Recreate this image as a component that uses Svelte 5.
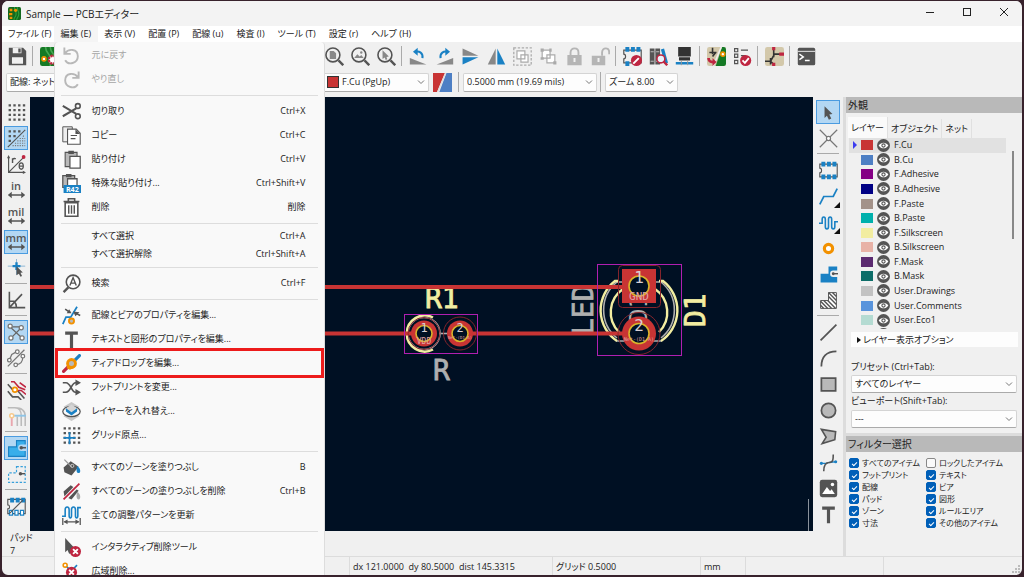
<script lang="ts">
	interface MenuEntry {
		label?: string;
		icon?: string;
		key?: string;
		disabled?: boolean;
		marked?: boolean;
	}

	// Icons share a 24 unit grid
	const icons: Record<string, string> = {
		app: '<rect width="24" height="24" rx="3" fill="#13691d"/><path d="M12 0c0 8 3 7 3 13s-4 5-4 11M17 0c0 8 3 7 3 13s-4 6-4 11" fill="none" stroke="#2fa33c" stroke-width="2"/><path d="M3 3h5v5H3zM2 11h6v4H2zM3 18h5v4H3z" fill="#f29100"/><circle cx="14" cy="6" r="3" fill="#f29100"/>',
		save: '<path d="M1 1h18l4 4v18H1z" fill="#545454"/><path d="M6 1h11v7H6zM5 13h14v8H5z" fill="#f0f0f0"/><path d="M13 2h3v5h-3z" fill="#545454"/>',
		board: '<rect width="24" height="24" rx="3" fill="#157a25"/><path d="M7 0c0 8 6 8 6 14v10M13 0c0 8 6 8 6 14v10" fill="none" stroke="#45a852" stroke-width="2"/><circle cx="5" cy="15" r="2.5" fill="#fff" stroke="#f29100" stroke-width="2"/><circle cx="16" cy="16" r="5" fill="#fff" stroke="#bf2641" stroke-width="3" stroke-dasharray="3 1"/>',
		undo: '<path d="M3 2v8h8M4 9c4-6 16-6 16 4 0 9-12 12-16 5" fill="none" stroke="#b8b8b8" stroke-width="2.4"/>',
		redo: '<path d="M21 2v8h-8M20 9C16 3 4 3 4 13c0 9 12 12 16 5" fill="none" stroke="#b8b8b8" stroke-width="2.4"/>',
		cut: '<path d="M1 5l17 10M1 18L18 8" stroke="#545454" stroke-width="2.600"/><circle cx="20" cy="5" r="3" fill="none" stroke="#545454" stroke-width="2"/><circle cx="20" cy="18" r="3" fill="none" stroke="#545454" stroke-width="2"/>',
		copy: '<path d="M1 1h12v19H1z" fill="#eee" stroke="#545454" stroke-width="1.2"/><path d="M7 4h11l5 5v14H7z" fill="#fff" stroke="#545454" stroke-width="1.4"/><path d="M17 4v6h6z" fill="#545454"/><path d="M11 12h8M11 16h6" stroke="#545454" stroke-width="1.5"/>',
		paste: '<path d="M4 3h15v18H4z" fill="#b9b9b9" stroke="#545454" stroke-width="1.4"/><path d="M8 1h7v4H8z" fill="#545454"/><path d="M10 8h13v15H10z" fill="#fff" stroke="#545454" stroke-width="1.6"/>',
		pasteSpecial: '<path d="M1 2h15v15H1z" fill="#b9b9b9" stroke="#545454" stroke-width="1.6"/><path d="M5 0h7v4H5z" fill="#545454"/><path d="M7 6h12v10H7z" fill="#fff" stroke="#545454" stroke-width="1.6"/><path d="M2 14h22v10H2z" fill="#1a81c4"/><text x="13" y="22.500" font-size="9" font-weight="700" text-anchor="middle" fill="#fff">R42</text>',
		trash: '<path d="M4 6h16v17H4z" fill="#fff" stroke="#545454" stroke-width="2"/><path d="M2 4.500h20M8 4V1h8v3" fill="none" stroke="#545454" stroke-width="2"/><path d="M8.500 9v11M12 9v11M15.500 9v11" stroke="#545454" stroke-width="1.8"/>',
		find: '<circle cx="14" cy="10" r="8.600" fill="#fff" stroke="#545454" stroke-width="2"/><path d="M8 17l-6 6" stroke="#545454" stroke-width="3"/><path d="M10 14.500l4-10 4 10M11.500 11.500h5" fill="none" stroke="#545454" stroke-width="1.8"/>',
		viaEdit: '<path d="M1 23l4-9h6L19 1" fill="none" stroke="#1a81c4" stroke-width="2.2"/><path d="M4 4l6 4M23 12l-6-3" stroke="#545454" stroke-width="2"/><path d="M12 9l-6 0 3-5zM14 7l8 1-5 5z" fill="#545454"/><circle cx="12" cy="19" r="3.200" fill="#b9b9b9" stroke="#f29100" stroke-width="2.4"/>',
		text: '<path d="M4 2h16v4h-6v17h-4V6H4z" fill="#545454"/>',
		teardrop: '<path d="M2 22l6-6" stroke="#bf2641" stroke-width="4" stroke-linecap="round"/><path d="M16 8l6-6" stroke="#1a81c4" stroke-width="4" stroke-linecap="round"/><path d="M6 18l1-9 8-3 3 3-2 8-6 3z" fill="#f29100"/><circle cx="12" cy="12" r="5" fill="#b9b9b9" stroke="#f29100" stroke-width="3.600"/>',
		swap: '<path d="M1 6h4c6 0 7 12 12 12h3M1 18h4c6 0 7-12 12-12h3" fill="none" stroke="#545454" stroke-width="2.2"/><path d="M17 2l7 4-7 4zM17 14l7 4-7 4z" fill="#545454"/>',
		layers: '<path d="M12 0l10 6-10 6L2 6z" fill="#c8c8c8"/><path d="M12 12l10 6-10 6-10-6z" fill="#c8c8c8"/><ellipse cx="12" cy="12" rx="11" ry="6.500" fill="#f9f9f9" stroke="#545454" stroke-width="1.6"/><path d="M12 3l9 6-9 6-9-6z" fill="#d5d5d5"/><path d="M5 8l7 5 7-5v4l-7 5-7-5z" fill="#1a81c4"/>',
		gridOrigin: '<path d="M2 3h21M2 9h21M2 15h21M2 21h21" stroke="#545454" stroke-width="3" stroke-dasharray="3 3"/><path d="M9.500 8v15M2 15h15" stroke="#1a81c4" stroke-width="2.2"/>',
		fill: '<path d="M2 12L11 4l10 7-9 11-9-4z" fill="#545454"/><path d="M3 2l9 9" stroke="#999" stroke-width="1.6"/><circle cx="13" cy="10" r="2" fill="none" stroke="#ddd" stroke-width="1"/><path d="M19 10c5 3 5 9 2 9-3 0-3-4-2-9z" fill="#1a81c4"/>',
		unfill: '<path d="M2 12L11 4l10 7-9 11-9-4z" fill="#545454"/><path d="M19 12c5 3 5 10 2 10-3 0-3-5-2-10z" fill="#aaa"/><path d="M2 23L22 2" stroke="#f9f9f9" stroke-width="5"/><path d="M2 22L22 2" stroke="#bf2641" stroke-width="2.2"/>',
		tune: '<path d="M0 13h4V5c0-5 5-5 5 0v7c0 4 3 4 3 0V5c0-5 5-5 5 0v7c0 4 3 4 3 0V2h4" fill="none" stroke="#1a81c4" stroke-width="2"/><path d="M1 15v9M23 15v9M3 20h18" stroke="#545454" stroke-width="1.6"/><path d="M2 20l5-3v6zM22 20l-5-3v6z" fill="#545454"/>',
		deleteTool: '<path d="M4 0l12 13-5 1 2 5-4 1-2-5-3 3z" fill="#545454"/><circle cx="17" cy="17" r="7" fill="#bf2641"/><path d="M14 14l6 6M20 14l-6 6" stroke="#fff" stroke-width="2.4"/>',
		globalDelete: '<path d="M4 4l16 16M2 20h8M19 4l-8 8" stroke="#1a81c4" stroke-width="2"/><circle cx="4" cy="4" r="2.500" fill="#fff" stroke="#f29100" stroke-width="2"/><circle cx="12" cy="13" r="7" fill="#bf2641"/><path d="M9 10l6 6M15 10l-6 6" stroke="#fff" stroke-width="2.400"/>',
		zoomPage: '<circle cx="10" cy="10" r="8.800" fill="none" stroke="#545454" stroke-width="2"/><path d="M17 17l6 6" stroke="#545454" stroke-width="3"/><path d="M6 5h5l3 3v7H6z" fill="#888"/>',
		zoomObjects: '<circle cx="10" cy="10" r="8.800" fill="none" stroke="#545454" stroke-width="2"/><path d="M17 17l6 6" stroke="#545454" stroke-width="3"/><path d="M4 14l4-5 3 3 2-2 3 4z" fill="#888"/><circle cx="13" cy="7" r="1.500" fill="#888"/>',
		zoomSelection: '<circle cx="10" cy="10" r="8.800" fill="none" stroke="#545454" stroke-width="2"/><path d="M17 17l6 6" stroke="#545454" stroke-width="3"/><path d="M7 4l8 8-3 .5 1 3-2 .8-1.300-3L7 15z" fill="#888"/>',
		rotateLeft: '<path d="M1 14l21 8H1z" fill="#888"/><path d="M17 14c1-7-4-9-9-8" fill="none" stroke="#1a81c4" stroke-width="2.600"/><path d="M11 1v10L5 6z" fill="#1a81c4"/>',
		rotateRight: '<path d="M23 14L2 22h21z" fill="#888"/><path d="M7 14C6 7 11 5 16 6" fill="none" stroke="#1a81c4" stroke-width="2.600"/><path d="M13 1v10l6-5z" fill="#1a81c4"/>',
		mirrorV: '<path d="M2 2l20 9H2z" fill="#888"/><path d="M2 22l20-9H2z" fill="#1a81c4"/>',
		mirrorH: '<path d="M11 2v20H1z" fill="#888"/><path d="M13 2v20h10z" fill="#1a81c4"/>',
		group: '<rect x="1" y="1" width="22" height="22" fill="none" stroke="#aaa" stroke-width="1.600" stroke-dasharray="3 2"/><path d="M5 5h10v10H5zM10 10h9v9h-9z" fill="#fff" stroke="#aaa" stroke-width="1.500"/>',
		ungroup: '<path d="M4 4h10v10H4zM10 10h10v10H10z" fill="#fff" stroke="#aaa" stroke-width="1.500"/><path d="M2 2h4v4H2zM13 2h3v4h-3zM2 13h4v3H2zM18 18h4v4h-4z" fill="#aaa"/>',
		lock: '<path d="M3 10h18v13H3z" fill="#b5b5b5"/><path d="M7 11V7c0-7 10-7 10 0v4" fill="none" stroke="#b5b5b5" stroke-width="2.400"/><path d="M12 14v5" stroke="#f0f0f0" stroke-width="2.500"/>',
		unlock: '<path d="M1 11h17v12H1z" fill="#b5b5b5"/><path d="M14 11V7c0-7 9-7 9 0v2" fill="none" stroke="#b5b5b5" stroke-width="2.400"/><path d="M9.500 14v5" stroke="#f0f0f0" stroke-width="2.500"/>',
		fpEditor: '<path d="M1 4h22v16H1v-5c3 0 3-6 0-6z" fill="none" stroke="#545454" stroke-width="1.500"/><path d="M3 0h5v6H3zM10 0h5v6h-5zM17 0h5v6h-5zM3 18h5v6H3z" fill="#1a81c4"/><circle cx="17" cy="17" r="7" fill="#bf2641"/><path d="M13 21l7-7" stroke="#fff" stroke-width="2.500"/>',
		library: '<path d="M1 2h6v20H1zM8 2h6v20H8z" fill="#545454"/><path d="M2 6h4M9 6h4M2 18h4M9 18h4" stroke="#bbb" stroke-width="1.500"/><path d="M15 3l4-1 5 18-4 1z" fill="#1a81c4"/><circle cx="15" cy="15" r="5" fill="#e8f2fa" stroke="#bf2641" stroke-width="2"/><path d="M18 18l5 5" stroke="#bf2641" stroke-width="3"/>',
		update3d: '<path d="M4 0h16v12H4zM5 13h14v4H5z" fill="#333"/><path d="M1 20.500h22" stroke="#1a81c4" stroke-width="3"/><path d="M8 17v6M16 17v6" stroke="#999" stroke-width="1.200"/>',
		schToPcb: '<rect width="24" height="24" rx="3" fill="#d3c8aa"/><path d="M19 0h2a3 3 0 0 1 3 3v18a3 3 0 0 1-3 3H11z" fill="#157a25"/><path d="M18 0L8 24" stroke="#eee" stroke-width="2"/><path d="M7 1v8M3 7h9M11 7L7 12" stroke="#333" stroke-width="2"/><circle cx="20" cy="9" r="2.500" fill="#fff" stroke="#f29100" stroke-width="2"/><path d="M2 14c0 5 3 5 6 5" fill="none" stroke="#bf2641" stroke-width="3.500"/><path d="M7 14v10l5-5z" fill="#bf2641"/>',
		drc: '<path d="M2 2h4v4H2zM2 9h4v4H2zM2 17h4v4H2z" fill="none" stroke="#545454" stroke-width="1.500"/><path d="M10 4h9M10 11h6" stroke="#545454" stroke-width="1.600"/><circle cx="16" cy="17" r="7" fill="#bf2641"/><path d="M12 17l3 3 5-6" fill="none" stroke="#fff" stroke-width="2.300"/>',
		schematic: '<rect width="24" height="24" rx="3" fill="#d3c8aa"/><path d="M11 0v8M11 9h13M11 6v7M12 9l-5 9M0 18h7M7 14v8M7 18l4 4" fill="none" stroke="#333" stroke-width="2"/><path d="M9 0h4v4H9zM18 7h6v4h-6zM9 20h4v4H9z" fill="#bf2641"/>',
		console: '<rect x="1" y="1" width="22" height="22" rx="2" fill="#545454"/><path d="M1 5.500h22" stroke="#eee" stroke-width="1.200"/><path d="M3 9l5 3.500L3 16M10 17h6" fill="none" stroke="#fff" stroke-width="1.800"/>',
		layerPair: '<path d="M0 0h15L5 24H0z" fill="#c83434"/><path d="M17 0h7v24H8z" fill="#4d7fc4"/><path d="M16 0L6 24" stroke="#ddd" stroke-width="1.500"/>',
		grid: '<path d="M2 3h21M2 9h21M2 15h21M2 21h21" stroke="#545454" stroke-width="3" stroke-dasharray="3 3"/>',
		gridOverride: '<path d="M2 3h15M2 9h9M2 15h3" stroke="#545454" stroke-width="3" stroke-dasharray="3 3"/><path d="M1 23L23 1" stroke="#545454" stroke-width="1.400"/><path d="M20 9h3M16 12h7M13 15h10M10 18h13M7 21h16" stroke="#777" stroke-width="1.500" stroke-dasharray="1.500 1.500"/>',
		polar: '<path d="M2 3v19h20M2 22L21 3" fill="none" stroke="#545454" stroke-width="1.500"/><path d="M0 4l2-4 2 4zM20 20l4 2-4 2z" fill="#545454"/><circle cx="21" cy="2.500" r="2.400" fill="#bf2641"/><path d="M7 10V4m0 2c1-2 3-2 4-1" fill="none" stroke="#545454" stroke-width="1.800"/><ellipse cx="18" cy="14" rx="2.600" ry="4" fill="none" stroke="#545454" stroke-width="1.600"/><path d="M15.500 14h5" stroke="#545454" stroke-width="1.400"/>',
		arrows: '<path d="M4 19h16" stroke="#545454" stroke-width="2"/><path d="M1 19l5-4v8zM23 19l-5-4v8z" fill="#545454"/>',
		cursor: '<path d="M12 0v20M1 9h22" stroke="#8ab4d4" stroke-width="1.200"/><path d="M12 4v10M7 9h10" stroke="#1a81c4" stroke-width="3"/><path d="M12 9l8 8-3 .5 2 4-2 1-2-4-3 2z" fill="#545454"/>',
		angle: '<path d="M3 1v20h20M3 21L19 4M3 13h6c2 2 3 4 3 8" fill="none" stroke="#545454" stroke-width="2"/>',
		ratsnest: '<path d="M5 6l14 13M5 5h15M4 20L18 6" stroke="#666" stroke-width="1.500"/><g fill="#fff" stroke="#777" stroke-width="1.600"><circle cx="4" cy="4" r="2.600"/><circle cx="18" cy="6" r="2.600"/><circle cx="5" cy="19" r="2.600"/><circle cx="19" cy="19" r="2.600"/></g>',
		curved: '<path d="M1 22L22 1M3 14l3-7 7-4M20 9c0 8-3 10-9 11" fill="none" stroke="#777" stroke-width="1.600"/><g fill="#fff" stroke="#777" stroke-width="1.600"><circle cx="13" cy="3.500" r="2.300"/><circle cx="3" cy="14" r="2.300"/><circle cx="20" cy="9" r="2.300"/><circle cx="11" cy="20" r="2.300"/></g>',
		highlight: '<path d="M1 4l7 8 6 1 8 9M1 13l6 7h7l4 4" fill="none" stroke="#545454" stroke-width="2"/><path d="M5 1h4l6 7 8 3M12 12l6 0 6 5M16 2l8 6" fill="none" stroke="#bf2641" stroke-width="2"/><circle cx="10" cy="11" r="3" fill="#fff" stroke="#f29100" stroke-width="2"/>',
		dim: '<path d="M1 1h9c5 0 8 4 8 10v13M10 1c8 0 13 3 13 11v12M13 12v12" fill="none" stroke="#bbb" stroke-width="2"/><path d="M6 11v13" stroke="#e9a6ae" stroke-width="2.400"/><path d="M9 11h15" stroke="#8fc4e6" stroke-width="2.400"/><circle cx="6" cy="11" r="2.500" fill="#fff" stroke="#f7c98c" stroke-width="2"/>',
		zone: '<path d="M12 2h11v20H2V10h10z" fill="#39aeea" stroke="#1a81c4" stroke-width="1.400"/><path d="M24 7h-6a4 4 0 1 0 0 8h6z" fill="#b3d7f3"/><path d="M18 11h6" stroke="#545454" stroke-width="2"/><circle cx="18" cy="11" r="2.200" fill="#545454"/>',
		zoneOutline: '<path d="M12 2h11v20H2V10h10z" fill="none" stroke="#39a0da" stroke-width="1.500" stroke-dasharray="3 2"/><path d="M17 11h6" stroke="#545454" stroke-width="1.800"/><circle cx="17" cy="11" r="2.200" fill="#545454"/>',
		padSketch: '<path d="M1 3h22v18H1v-6c3 0 3-5 0-5z" fill="none" stroke="#545454" stroke-width="1.400"/><path d="M4 1h5v6H4zM11 1h5v6h-5zM18 1h5v6h-5z" fill="#1a81c4"/><path d="M3 17h4v6H3zM10 17h4v6h-4zM17 17h4v6h-4z" fill="#fff" stroke="#1a81c4" stroke-width="1.500"/><path d="M3 21L20 4" stroke="#545454" stroke-width="1.400"/>',
		select: '<path d="M7 4l10 10-4 .5 2.500 5-3 1.500-2.500-5-3 3z" fill="#545454"/>',
		localRats: '<path d="M1 1l22 22M23 1L1 23" stroke="#777" stroke-width="1.500"/><circle cx="12" cy="12" r="2.600" fill="#fff" stroke="#777" stroke-width="1.500"/>',
		footprint: '<path d="M1 4h22v16H1v-5c3 0 3-6 0-6z" fill="none" stroke="#545454" stroke-width="1.400"/><path d="M3 1h5v6H3zM10 1h5v6h-5zM17 1h5v6h-5zM3 17h5v6H3zM10 17h5v6h-5zM17 17h5v6h-5z" fill="#1a81c4"/>',
		route: '<path d="M1 22l5-10h12l5-10" fill="none" stroke="#1a81c4" stroke-width="2.200"/>',
		meander: '<path d="M0 13h4V8c0-4 4-4 4 0v9c0 4 4 4 4 0V8c0-4 4-4 4 0v9c0 4 4 4 4 0v-6h4" fill="none" stroke="#1a81c4" stroke-width="2"/>',
		via: '<circle cx="12" cy="12" r="5.200" fill="#fff" stroke="#f29100" stroke-width="4"/>',
		drawZone: '<path d="M12 2h11v20H2V11h10z" fill="#1a81c4"/><path d="M24 7h-6a4 4 0 1 0 0 8h6z" fill="#f0f0f0"/><path d="M18 11h6" stroke="#545454" stroke-width="1.800"/><circle cx="18" cy="11" r="1.800" fill="#545454"/>',
		ruleArea: '<path d="M12 2h10v20H2V12h10z" fill="#fff" stroke="#545454" stroke-width="1.200"/><path d="M12 2l10 10M12 7l10 10M11 12l10 10M6 12l10 10M2 13l9 9M2 18l4 4M17 2l5 5" stroke="#545454" stroke-width="1.800"/>',
		line: '<path d="M2 22L22 2" stroke="#545454" stroke-width="2.200"/>',
		arc: '<path d="M3 22C3 10 9 3 22 3" fill="none" stroke="#545454" stroke-width="2.200"/>',
		rect: '<path d="M3 4h18v16H3z" fill="#b9b9b9" stroke="#545454" stroke-width="2.200"/>',
		circle: '<circle cx="12" cy="12" r="9" fill="#b9b9b9" stroke="#545454" stroke-width="2.200"/>',
		polygon: '<path d="M3 3l18 3-1 10L4 21l5-8z" fill="#b9b9b9" stroke="#545454" stroke-width="2"/>',
		bezier: '<path d="M2 13h9M13 12l9-1" stroke="#1a81c4" stroke-width="1.600"/><path d="M6 23c0-8 2-11 7-11s5-4 5-10" fill="none" stroke="#545454" stroke-width="2"/><circle cx="3" cy="13" r="2" fill="#1a81c4"/><circle cx="21" cy="11" r="2" fill="#1a81c4"/>',
		image: '<rect x="1" y="1" width="22" height="22" rx="3" fill="#545454"/><path d="M4 19l6-9 4 5 2-2 4 6z" fill="#fff"/><circle cx="17" cy="7" r="2.200" fill="#fff"/>',
		eye: '<circle cx="12" cy="12" r="12" fill="#545454"/><path d="M3 12c5-7 13-7 18 0-5 7-13 7-18 0z" fill="#fff"/><circle cx="12" cy="12" r="3" fill="#fff" stroke="#545454" stroke-width="2"/>'
	};

	const editMenu: MenuEntry[] = [
		{ label: '元に戻す', icon: 'undo', disabled: true },
		{ label: 'やり直し', icon: 'redo', disabled: true },
		{},
		{ label: '切り取り', icon: 'cut', key: 'Ctrl+X' },
		{ label: 'コピー', icon: 'copy', key: 'Ctrl+C' },
		{ label: '貼り付け', icon: 'paste', key: 'Ctrl+V' },
		{ label: '特殊な貼り付け...', icon: 'pasteSpecial', key: 'Ctrl+Shift+V' },
		{ label: '削除', icon: 'trash', key: '削除' },
		{},
		{ label: 'すべて選択', key: 'Ctrl+A' },
		{ label: 'すべて選択解除', key: 'Ctrl+Shift+A' },
		{},
		{ label: '検索', icon: 'find', key: 'Ctrl+F' },
		{},
		{ label: '配線とビアのプロパティを編集...', icon: 'viaEdit' },
		{ label: 'テキストと図形のプロパティを編集...', icon: 'text' },
		{ label: 'ティアドロップを編集...', icon: 'teardrop', marked: true },
		{ label: 'フットプリントを変更...', icon: 'swap' },
		{ label: 'レイヤーを入れ替え...', icon: 'layers' },
		{ label: 'グリッド原点...', icon: 'gridOrigin' },
		{},
		{ label: 'すべてのゾーンを塗りつぶし', icon: 'fill', key: 'B' },
		{ label: 'すべてのゾーンの塗りつぶしを削除', icon: 'unfill', key: 'Ctrl+B' },
		{ label: '全ての調整パターンを更新', icon: 'tune' },
		{},
		{ label: 'インタラクティブ削除ツール', icon: 'deleteTool' },
		{ label: '広域削除...', icon: 'globalDelete' }
	];

	const menusAfterEdit = ['表示 (V)', '配置 (P)', '配線 (u)', '検査 (I)', 'ツール (T)', '設定 (r)', 'ヘルプ (H)'];

	const mainTools = [
		'zoomPage', 'zoomObjects', 'zoomSelection', '|',
		'rotateLeft', 'rotateRight', 'mirrorV', 'mirrorH', 'group', 'ungroup', 'lock', 'unlock', '|',
		'fpEditor', 'library', 'update3d', '|',
		'schToPcb', 'drc', '|',
		'schematic', '|',
		'console'
	];

	const leftTools = [
		'grid', 'gridOverride', 'polar', 'in', 'mil', 'mm', 'cursor', '|',
		'angle', '|',
		'ratsnest', 'curved', '|',
		'highlight', 'dim', '|',
		'zone', 'zoneOutline', '|',
		'padSketch'
	];

	const rightTools = [
		'select', 'localRats', '|',
		'footprint', 'route', 'meander', 'via', 'drawZone', 'ruleArea', '|',
		'line', 'arc', 'rect', 'circle', 'polygon', 'bezier', 'image', 'text'
	];

	const units = ['in', 'mil', 'mm'];
	const withFlyout = ['route', 'meander'];
	let active = $state(['gridOverride', 'mm', 'ratsnest', 'zone', 'select']);

	const layers = [
		{ name: 'F.Cu', color: '#c83434' },
		{ name: 'B.Cu', color: '#4d7fc4' },
		{ name: 'F.Adhesive', color: '#840084' },
		{ name: 'B.Adhesive', color: '#000084' },
		{ name: 'F.Paste', color: '#a39289' },
		{ name: 'B.Paste', color: '#00b0ac' },
		{ name: 'F.Silkscreen', color: '#f2eda1' },
		{ name: 'B.Silkscreen', color: '#e8b2a7' },
		{ name: 'F.Mask', color: '#5b2a70' },
		{ name: 'B.Mask', color: '#0d6d68' },
		{ name: 'User.Drawings', color: '#c2c2c2' },
		{ name: 'User.Comments', color: '#5994dc' },
		{ name: 'User.Eco1', color: '#b4dbd2' },
		{ name: '', color: '#d8c852' }
	];
	let activeLayer = $state('F.Cu');

	const tabs = ['レイヤー', 'オブジェクト', 'ネット'];
	let activeTab = $state('レイヤー');

	let filters = $state([
		{ label: 'すべてのアイテム', on: true },
		{ label: 'ロックしたアイテム', on: false },
		{ label: 'フットプリント', on: true },
		{ label: 'テキスト', on: true },
		{ label: '配線', on: true },
		{ label: 'ビア', on: true },
		{ label: 'パッド', on: true },
		{ label: '図形', on: true },
		{ label: 'ゾーン', on: true },
		{ label: 'ルールエリア', on: true },
		{ label: '寸法', on: true },
		{ label: 'その他のアイテム', on: true }
	]);

	function toggle(name: string) {
		active = active.includes(name) ? active.filter((n) => n !== name) : [...active, name];
	}
</script>

{#snippet icon(name: string)}
	<svg class="icon" viewBox="0 0 24 24" aria-hidden="true">{@html icons[name]}</svg>
{/snippet}

{#snippet tool(name: string)}
	{#if name === '|'}
		<span class="divider"></span>
	{:else}
		<button
			class="tool"
			class:active={active.includes(name)}
			class:flyout={withFlyout.includes(name)}
			aria-label={name}
			onclick={() => toggle(name)}
		>
			{#if units.includes(name)}
				<span class="unit">{name}</span>
				<svg class="unit-arrow" viewBox="0 14 24 10" aria-hidden="true">{@html icons.arrows}</svg>
			{:else}
				{@render icon(name)}
			{/if}
		</button>
	{/if}
{/snippet}

{#snippet combo(id: string, value: string, label?: string, swatch?: string)}
	<span class="combo {id}">
		{#if swatch}<span class="combo-swatch" style="background: {swatch}"></span>{/if}
		<select {id} aria-label={label}>
			<option>{value}</option>
		</select>
		<svg class="chevron" viewBox="0 0 8 8" aria-hidden="true"><path d="M1 2.500l3 3 3-3" /></svg>
	</span>
{/snippet}

<div class="window">
	<header class="titlebar">
		{@render icon('app')}
		<h1>Sample — PCBエディター</h1>
		<div class="window-buttons">
			<button aria-label="最小化"><svg viewBox="0 0 10 10"><path d="M1 5.500h8" /></svg></button>
			<button aria-label="最大化"><svg viewBox="0 0 10 10"><rect x="1.500" y="1.500" width="7" height="7" /></svg></button>
			<button aria-label="閉じる"><svg viewBox="0 0 10 10"><path d="M1 1l8 8M9 1l-8 8" /></svg></button>
		</div>
	</header>

	<nav class="menubar">
		<button class="first">ファイル (F)</button>
		<div class="menu-holder">
			<button class="open">編集 (E)</button>
			<div class="menu" role="menu">
				{#each editMenu as entry}
					{#if entry.label}
						<button
							class="entry"
							class:plain={!entry.icon}
							class:marked={entry.marked}
							role="menuitem"
							disabled={entry.disabled}
						>
							<span class="entry-icon">{#if entry.icon}{@render icon(entry.icon)}{/if}</span>
							<span class="entry-label">{entry.label}</span>
							<span>{entry.key ?? ''}</span>
						</button>
					{:else}
						<hr />
					{/if}
				{/each}
			</div>
		</div>
		{#each menusAfterEdit as name}
			<button>{name}</button>
		{/each}
	</nav>

	<div class="toolbar">
		<div class="toolbar-start">
			{@render tool('save')}
			{@render tool('|')}
			{@render tool('board')}
		</div>
		{#each mainTools as name}
			{@render tool(name)}
		{/each}
	</div>

	<div class="options">
		{@render combo('track', '配線: ネットクラスの幅を使用', '配線幅')}
		{@render combo('layer', 'F.Cu (PgUp)', 'レイヤー', '#c83434')}
		<span class="layer-pair">{@render icon('layerPair')}</span>
		<span class="divider"></span>
		{@render combo('grid-size', '0.5000 mm (19.69 mils)', 'グリッド')}
		<span class="divider"></span>
		{@render combo('zoom', 'ズーム 8.00', 'ズーム')}
	</div>

	<main>
		<div class="work">
			<div class="toolstrip">
				{#each leftTools as name}
					{@render tool(name)}
				{/each}
			</div>

			<svg class="canvas" aria-label="PCB">
				<g transform="translate(-30 -97)">
					<!-- silkscreen and fabrication -->
					<g class="fab">
						<circle cx="424" cy="333.500" r="16" />
						<path d="M440 333.500h8" />
						<path d="M617 282a36 36 0 0 0 0 56M661 282a36 36 0 0 1 0 56" />
						<path d="M613 282h52M616 341h46" />
					</g>
					<g class="silk">
						<path d="M433 317.500a18 18 0 1 0 0 32" />
						<path d="M619 281h-4a37 37 0 0 0 2 60M659 281h4a37 37 0 0 1-2 60" />
						<path d="M623 289a28 28 0 0 0-4 43M655 289a28 28 0 0 1 4 43" />
					</g>
					<text class="silk-text" x="425" y="308">R1</text>
					<text class="fab-text" x="433" y="380">R</text>
					<text class="fab-text" transform="translate(593 335) rotate(-90)">LED</text>
					<text class="silk-text" transform="translate(705 327) rotate(-90)">D1</text>
					<text class="fab-text middle" transform="translate(647 323) rotate(-90)">D1</text>

					<!-- tracks -->
					<path class="trace" d="M30 287h609M30 333.500h394M460 333.500h179" />

					<!-- R1 pads -->
					<circle class="clearance" cx="424" cy="333.500" r="16" />
					<circle class="clearance" cx="460" cy="333.500" r="16.500" />
					<circle class="pad" cx="424" cy="333.500" r="13" />
					<circle class="pad" cx="460" cy="333.500" r="13" />
					<circle class="hole" cx="424" cy="333.500" r="8" />
					<circle class="hole" cx="460" cy="333.500" r="8" />
					<text class="pad-number" x="424" y="332">1</text>
					<text class="pad-number" x="460" y="332">2</text>
					<text class="net" x="424" y="344">VDD</text>
					<text class="net tiny" x="460" y="339">Net-(D1-A)</text>

					<!-- D1 pads -->
					<rect class="clearance" x="618.500" y="265.500" width="42" height="42" rx="4" />
					<circle class="clearance" cx="639" cy="333.500" r="21" />
					<rect class="pad" x="622" y="269" width="34" height="34" />
					<circle class="pad" cx="639" cy="333.500" r="17" />
					<circle class="hole" cx="639" cy="286" r="10" />
					<circle class="hole" cx="639" cy="333.500" r="10" />
					<text class="pad-number big" x="639" y="283">1</text>
					<text class="pad-number big" x="639" y="331">2</text>
					<text class="net mid" x="639" y="300">GND</text>
					<text class="net tiny wide" x="639" y="341">Net-(D1-A)</text>

					<rect class="courtyard" x="404.500" y="314.500" width="73" height="39" />
					<rect class="courtyard" x="597.500" y="264.500" width="84" height="91" />
					<path class="sheet-edge" d="M808.500 499v32M776 531.500h37" />
				</g>
			</svg>

			<div class="toolstrip right">
				{#each rightTools as name}
					{@render tool(name)}
				{/each}
			</div>
		</div>

		<aside>
			<h2>外観</h2>
			<section class="appearance">
				<div class="tabs" role="tablist">
					{#each tabs as tab}
						<button role="tab" aria-selected={tab === activeTab} onclick={() => (activeTab = tab)}>{tab}</button>
					{/each}
				</div>
				<div class="layer-panel">
					<ul>
						{#each layers as layer}
							<li class:current={layer.name === activeLayer}>
								<button onclick={() => (activeLayer = layer.name)}>
									<span class="pointer"></span>
									<span class="swatch" style="background: {layer.color}"></span>
									{@render icon('eye')}
									<span>{layer.name}</span>
								</button>
							</li>
						{/each}
					</ul>
					<span class="scroll-thumb"></span>
				</div>
				<button class="layer-options"><span class="triangle"></span>レイヤー表示オプション</button>
				<div class="presets">
					<label for="preset">プリセット (Ctrl+Tab):</label>
					{@render combo('preset', 'すべてのレイヤー')}
					<label for="viewport">ビューポート(Shift+Tab):</label>
					{@render combo('viewport', '---')}
				</div>
			</section>
			<h2>フィルター選択</h2>
			<div class="filters">
				{#each filters as filter}
					<label><input type="checkbox" bind:checked={filter.on} />{filter.label}</label>
				{/each}
			</div>
		</aside>

		<dl class="message">
			<dt>パッド</dt>
			<dd>7</dd>
		</dl>
	</main>

	<footer>
		<span class="field coords"></span>
		<span class="field delta">dx 121.0000&nbsp; dy 80.5000&nbsp; dist 145.3315</span>
		<span class="field grid-field">グリッド 0.5000</span>
		<span class="field unit-field">mm</span>
		<span class="field tool-field"></span>
		<span class="field"></span>
		<svg class="grip" viewBox="0 0 8 8" aria-hidden="true"><path d="M6 0h2v2H6zM3 3h2v2H3zM6 3h2v2H6zM0 6h2v2H0zM3 6h2v2H3zM6 6h2v2H6z" /></svg>
	</footer>
</div>

<style>
	:global(body) {
		background: #38222c;
	}

	.window {
		display: flex;
		flex-direction: column;
		box-sizing: border-box;
		height: 100vh;
		border: solid #38222c;
		border-width: 1px 2px 2px;
		border-radius: 8px;
		overflow: hidden;
		background: #f0f0f0;
		color: #222;
		font: 9px/12px 'Open Sans', 'Noto Sans CJK JP', sans-serif;
		font-feature-settings: 'palt';
	}

	button,
	select,
	input {
		margin: 0;
		padding: 0;
		border: 0;
		background: none;
		color: inherit;
		font: inherit;
		font-feature-settings: inherit;
	}

	h1,
	h2,
	ul,
	dl,
	dd {
		margin: 0;
		padding: 0;
		font-weight: 400;
		list-style: none;
	}

	.icon {
		display: block;
		flex: none;
		width: 19px;
		height: 19px;
	}

	/* title bar and menus */
	.titlebar {
		display: flex;
		flex: none;
		align-items: center;
		gap: 5px;
		height: 25px;
		padding-left: 6px;
		background: #f3f3f3;
	}

	.titlebar .icon {
		width: 13px;
		height: 13px;
	}

	h1 {
		flex: 1;
		font-size: 10px;
	}

	.window-buttons {
		display: flex;
	}

	.window-buttons button {
		width: 37px;
		height: 25px;
	}

	.window-buttons svg {
		width: 10px;
		height: 10px;
		fill: none;
		stroke: #222;
	}

	.menubar {
		display: flex;
		flex: none;
		height: 16px;
		background: #fff;
	}

	.menubar > button,
	.menu-holder > button {
		padding: 0 7px 0 6px;
		height: 16px;
		white-space: nowrap;
	}

	.menubar > .first {
		padding-right: 3px;
	}

	.menu-holder {
		position: relative;
	}

	.menu-holder > .open {
		background: #f5f5f5;
	}

	.menu {
		position: absolute;
		z-index: 2;
		top: 100%;
		left: 0;
		box-sizing: border-box;
		width: 271px;
		padding: 1px 0;
		border: solid #ddd;
		border-width: 0 1px;
		border-radius: 4px 4px 0 0;
		background: #f9f9f9;
	}

	.entry {
		position: relative;
		display: flex;
		align-items: center;
		width: 100%;
		height: 24px;
		padding: 0 19px 0 7px;
		text-align: left;
	}

	.entry.plain {
		height: 18px;
	}

	.entry:disabled {
		color: #a5a5a5;
	}

	.entry-icon {
		width: 29px;
	}

	.entry-label {
		flex: 1;
	}

	.entry.marked::after {
		content: '';
		position: absolute;
		inset: -3px 0;
		border: 3px solid #ed1c1c;
	}

	.menu hr {
		margin: 4px 6px 3px;
		border: 0;
		border-top: 1px solid #ddd;
	}

	/* toolbars */
	.toolbar {
		display: flex;
		flex: none;
		align-items: center;
		height: 28px;
	}

	.toolbar-start {
		display: flex;
		align-items: center;
		box-sizing: border-box;
		width: 319px;
		padding-left: 2px;
	}

	.tool {
		position: relative;
		display: grid;
		flex: none;
		place-content: center;
		justify-items: center;
		box-sizing: border-box;
		width: 26px;
		height: 26px;
	}

	.toolstrip .tool {
		width: 24px;
		height: 24px;
		margin: 1px;
	}

	.tool.active {
		border: 1px solid #4a9be0;
		background: #b3d7f3;
	}

	.tool.flyout::after {
		content: '';
		position: absolute;
		right: 0;
		bottom: 0;
		border-bottom: 6px solid #111;
		border-left: 6px solid transparent;
	}

	.unit {
		color: #545454;
		font: 600 11px/10px 'Open Sans', sans-serif;
	}

	.unit-arrow {
		width: 19px;
		height: 8px;
	}

	.divider {
		flex: none;
		box-sizing: border-box;
		width: 1px;
		height: 20px;
		margin: 0 3px 0 2px;
		background: #aaa;
	}

	.options {
		display: flex;
		flex: none;
		align-items: center;
		gap: 1px;
		box-sizing: border-box;
		height: 27px;
		padding: 0 0 3px 4px;
	}

	.combo {
		position: relative;
		display: flex;
		align-items: center;
		box-sizing: border-box;
		height: 19px;
		border: 1px solid #d4d4d4;
		border-bottom-color: #aaa;
		border-radius: 2px;
		background: #fdfdfd;
	}

	.combo select {
		flex: 1;
		min-width: 0;
		height: 17px;
		padding: 0 14px 0 3px;
		appearance: none;
	}

	.chevron {
		position: absolute;
		right: 3px;
		width: 8px;
		height: 8px;
		fill: none;
		stroke: #777;
		pointer-events: none;
	}

	.combo-swatch {
		box-sizing: border-box;
		width: 12px;
		height: 12px;
		margin-left: 6px;
		border: 1px solid #333;
	}

	.track {
		width: 313px;
	}

	.layer {
		width: 109px;
	}

	.layer-pair {
		margin: 0 3px;
	}

	.grid-size {
		width: 134px;
	}

	.zoom {
		width: 73px;
	}

	/* work area */
	main {
		display: grid;
		flex: 1;
		grid-template-columns: 1fr 179px;
		grid-template-rows: 1fr 25px;
		min-height: 0;
	}

	.work {
		display: flex;
		min-height: 0;
	}

	.toolstrip {
		display: flex;
		flex: none;
		flex-direction: column;
		align-items: center;
		width: 28px;
		padding-top: 2px;
	}

	.toolstrip.right {
		width: 30px;
	}

	.toolstrip .divider {
		width: 22px;
		height: 1px;
		margin: 2px 0 3px;
	}

	.canvas {
		flex: 1;
		min-width: 0;
		height: 100%;
		background: #001023;
	}

	.silk {
		fill: none;
		stroke: #f2eda1;
		stroke-width: 2.4;
	}

	.fab {
		fill: none;
		stroke: #afafaf;
		stroke-width: 1.6;
	}

	.silk-text,
	.fab-text {
		font: 28px 'DejaVu Sans Mono', monospace;
		fill: #f2eda1;
		stroke: #f2eda1;
		stroke-width: 0.8;
	}

	.fab-text {
		fill: #afafaf;
		stroke: #afafaf;
	}

	.fab-text.middle {
		font-size: 24px;
		stroke: none;
	}

	.trace {
		fill: none;
		stroke: #c83434;
		stroke-width: 4;
	}

	.pad {
		fill: #c83434;
	}

	.hole {
		fill: #001023;
		stroke: #d9b42c;
		stroke-width: 1.6;
	}

	.clearance {
		fill: none;
		stroke: #84242c;
	}

	.courtyard {
		fill: none;
		stroke: #b01fb0;
	}

	.pad-number,
	.net {
		font: 12px 'DejaVu Sans Mono', monospace;
		fill: #d8cfd3;
		text-anchor: middle;
	}

	.pad-number.big {
		font-size: 16px;
	}

	.net {
		font-size: 8px;
		fill: #e0a3a5;
	}

	.net.mid {
		font-size: 11px;
	}

	.net.tiny {
		font-size: 4px;
	}

	.net.wide {
		font-size: 5px;
	}

	.sheet-edge {
		fill: none;
		stroke: #8a929c;
	}

	/* side panel */
	aside {
		grid-row: 1 / 3;
		grid-column: 2;
		border-left: 3px solid #dcdcdc;
	}

	h2 {
		height: 16px;
		padding-left: 2px;
		background: #b9b9b9;
		font-size: 10px;
		line-height: 16px;
	}

	.appearance {
		border-bottom: 3px solid #dcdcdc;
	}

	.tabs {
		display: flex;
		align-items: flex-end;
		height: 25px;
		padding-left: 2px;
	}

	.tabs button {
		height: 19px;
		padding: 0 3px;
		border-right: 1px solid #e0e0e0;
	}

	.tabs button[aria-selected='true'] {
		height: 21px;
		background: #fafafa;
	}

	.layer-panel {
		display: flex;
		justify-content: space-between;
		height: 191px;
		margin: 0 8px 3px 3px;
		overflow: hidden;
	}

	ul {
		display: grid;
		flex: none;
		grid-auto-rows: 1fr;
		width: 157px;
		height: 204px;
	}

	li {
		display: flex;
		min-height: 0;
	}

	li button {
		display: flex;
		flex: 1;
		align-items: center;
		gap: 4px;
		padding-left: 4px;
	}

	li .icon {
		width: 13px;
		height: 13px;
	}

	li.current {
		background: #e1e1e1;
	}

	.pointer {
		box-sizing: border-box;
		width: 4px;
	}

	.current .pointer {
		height: 8px;
		border: solid transparent;
		border-width: 4px 0 4px 4px;
		border-left-color: #3c3cf0;
	}

	.swatch {
		width: 12px;
		height: 10px;
	}

	.scroll-thumb {
		width: 2px;
		height: 88px;
		margin-top: 13px;
		background: #888;
	}

	.layer-options {
		display: flex;
		align-items: center;
		gap: 2px;
		width: 167px;
		height: 15px;
		margin-left: 5px;
		padding-left: 6px;
		background: #fdfdfd;
	}

	.triangle {
		border: solid transparent;
		border-width: 3px 0 3px 4px;
		border-left-color: #111;
	}

	.presets {
		display: grid;
		grid-template-rows: 16px 18px 16px 19px;
		align-items: center;
		margin-top: 12px;
		padding: 0 5px 5px;
	}

	.presets .combo {
		height: 18px;
	}

	.filters {
		display: grid;
		grid-template-columns: 77px 1fr;
		padding: 5px 3px;
		font-size: 8px;
	}

	.filters label {
		display: flex;
		align-items: center;
		gap: 3px;
		height: 12px;
		white-space: nowrap;
	}

	.filters input {
		flex: none;
		box-sizing: border-box;
		width: 10px;
		height: 10px;
		border: 1px solid #888;
		border-radius: 2px;
		background: #fafafa;
		appearance: none;
	}

	.filters input:checked {
		display: grid;
		place-items: center;
		border-color: #005fb8;
		background: #005fb8;
	}

	.filters input:checked::before {
		content: '';
		width: 4px;
		height: 2px;
		border: solid #fff;
		border-width: 0 0 1px 1px;
		transform: rotate(-45deg);
	}

	.message {
		padding-left: 8px;
		line-height: 13px;
	}

	/* status bar */
	footer {
		display: flex;
		flex: none;
		align-items: center;
		height: 18px;
		border-top: 1px solid #dcdcdc;
	}

	.field {
		flex: none;
		box-sizing: border-box;
		height: 18px;
		padding-left: 3px;
		border-right: 1px solid #dcdcdc;
		line-height: 20px;
	}

	.field:last-of-type {
		flex: 1;
		border: 0;
	}

	.coords {
		width: 348px;
	}

	.delta {
		width: 203px;
	}

	.grid-field {
		width: 148px;
	}

	.unit-field {
		width: 45px;
	}

	.tool-field {
		width: 138px;
	}

	.grip {
		align-self: flex-end;
		width: 8px;
		height: 8px;
		margin: 2px;
		fill: #bbb;
	}
</style>
